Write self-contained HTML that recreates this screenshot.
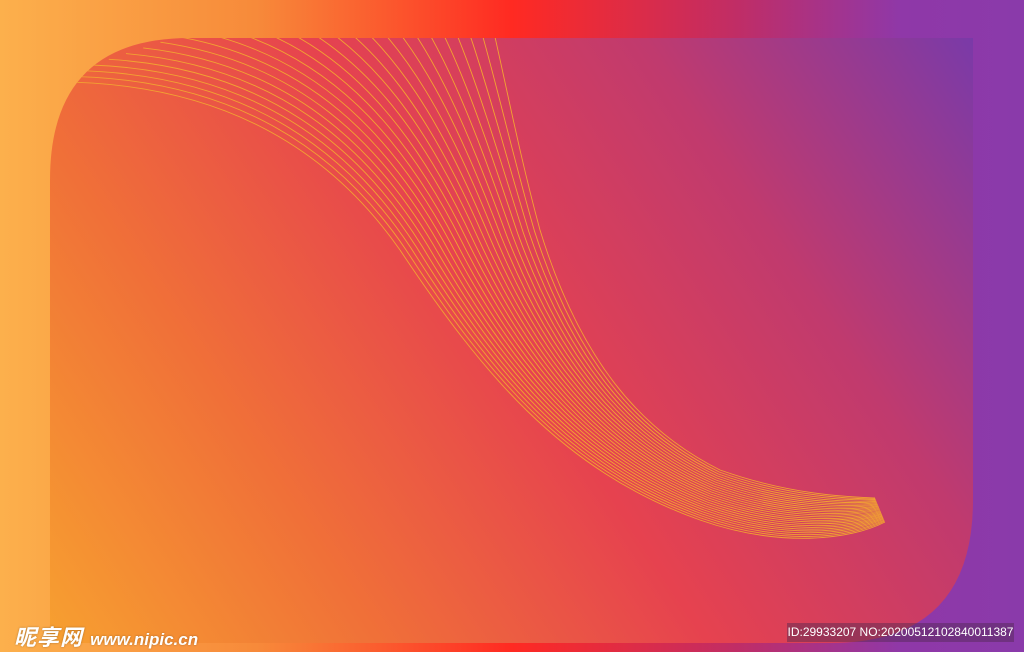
<!DOCTYPE html>
<html><head><meta charset="utf-8"><style>
html,body{margin:0;padding:0;width:1024px;height:652px;overflow:hidden}
body{position:relative;background:linear-gradient(90deg,#fcb04c 0%,#f78a3a 25%,#ff2a22 50%,#c02d66 72%,#8f38a8 88%,#8a3aaa 100%)}
svg{position:absolute;left:0;top:0}
.logo{position:absolute;left:14px;top:620px;color:#fff;font:bold italic 22px "Liberation Sans","Noto Sans CJK SC",sans-serif;letter-spacing:1px;text-shadow:0 0 2px rgba(0,0,0,.3)}
.logo span{font-size:17px;letter-spacing:0}
.id{position:absolute;left:787px;top:623px;width:227px;height:19px;background:rgba(80,40,80,.45);color:#fff;font:12px "Liberation Sans",sans-serif;line-height:19px;text-align:center}
</style></head><body>
<svg width="1024" height="652" viewBox="0 0 1024 652">
<defs>
<linearGradient id="g" x1="50" y1="643" x2="973" y2="38" gradientUnits="userSpaceOnUse">
<stop offset="0" stop-color="#f7a030"/>
<stop offset="0.25" stop-color="#f07038"/>
<stop offset="0.5" stop-color="#e6424f"/>
<stop offset="0.75" stop-color="#c03a6e"/>
<stop offset="1" stop-color="#7a3aa8"/>
</linearGradient>
<clipPath id="c"><path d="M190,38 H973 V500 Q973,643 830,643 H50 V180 Q50,38 190,38 Z"/></clipPath>
</defs>
<path d="M190,38 H973 V500 Q973,643 830,643 H50 V180 Q50,38 190,38 Z" fill="url(#g)"/>
<g id="lines" clip-path="url(#c)" fill="none" stroke="#f2a232" stroke-width="0.9"></g>
</svg>
<div class="logo">昵享网 <span>www.nipic.cn</span></div>
<div class="id">ID:29933207 NO:20200512102840011387</div>
<script>
var A=[40,82, 220,78,330,150,400,250, 480,370,560,470,700,520, 780,548,850,540,885,522];
var B=[470,-60, 495,20,510,120,540,230, 580,360,640,430,720,470, 790,495,850,497,875,498];
var g=document.getElementById('lines'),n=26,s='';
for(var i=0;i<n;i++){var t=i/(n-1),p=A.map(function(a,k){return (a+(B[k]-a)*t).toFixed(1)});
s+='<path d="M'+p[0]+','+p[1]+' C'+p.slice(2,8).join(' ')+' C'+p.slice(8,14).join(' ')+' C'+p.slice(14,20).join(' ')+'"/>';}
g.innerHTML=s;
</script>
</body></html>
